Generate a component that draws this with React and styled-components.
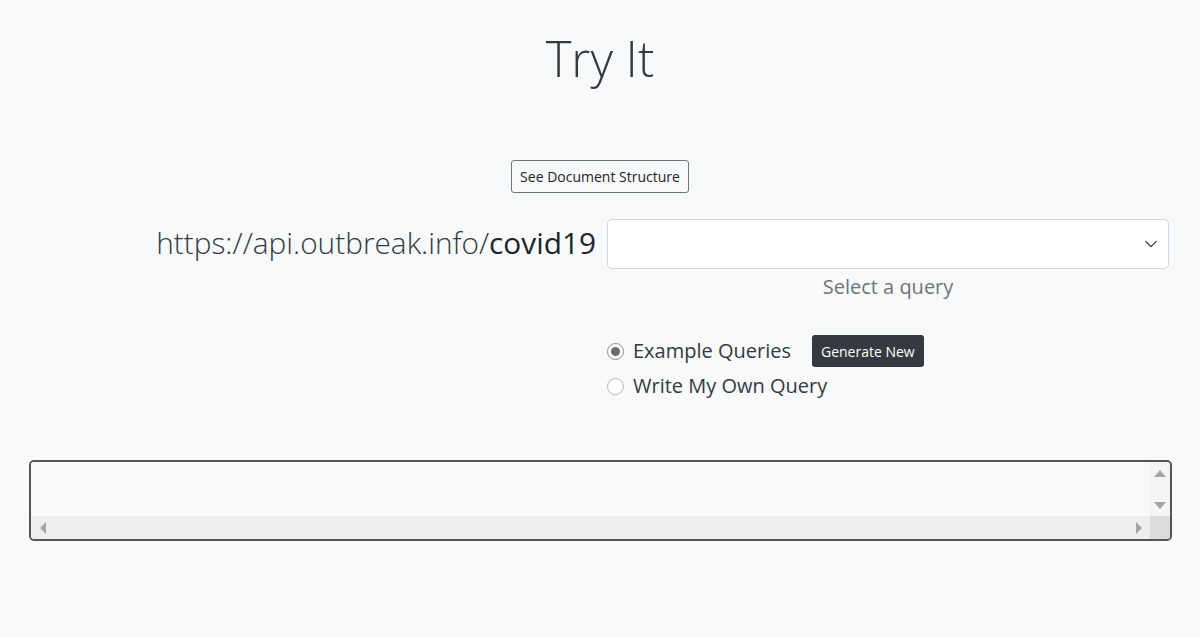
import React from "react";
import styled, { createGlobalStyle } from "styled-components";

const Global = createGlobalStyle`
  html, body { margin: 0; padding: 0; background: #f8f9fa; }
  body { font-family: "Open Sans", "Noto Sans", sans-serif; color: #343a40; }
`;

const Page = styled.div`
  width: 1200px;
  height: 637px;
  box-sizing: border-box;
  display: flex;
  flex-direction: column;
  align-items: center;
  padding-top: 18px;
`;

const Title = styled.h1`
  margin: 0;
  font-weight: 300;
  font-size: 49px;
  line-height: 80px;
  color: #343a40;
`;

const OutlineButton = styled.button`
  margin-top: 62px;
  font-family: inherit;
  font-size: 14px;
  color: #212529;
  background: #f8f9fa;
  border: 1px solid #6c757d;
  border-radius: 3px;
  height: 33px;
  padding: 0 8px;
`;

const QueryRow = styled.div`
  margin-top: 26px;
  width: 100%;
  display: grid;
  grid-template-columns: 596px 562px;
  column-gap: 11px;
`;

const Url = styled.div`
  text-align: right;
  font-size: 29.8px;
  font-weight: 300;
  line-height: 48px;
  color: #343a40;
  white-space: nowrap;
`;

const Bold = styled.span`
  font-weight: 400;
  color: #212529;
`;

const SelectCol = styled.div`
  display: flex;
  flex-direction: column;
  align-items: center;
`;

const SelectBox = styled.div`
  box-sizing: border-box;
  width: 100%;
  height: 50px;
  background: #fff;
  border: 1px solid #ced4da;
  border-radius: 5px;
  display: flex;
  align-items: center;
  justify-content: flex-end;
  padding-right: 10px;
`;

const Hint = styled.div`
  margin-top: 4px;
  font-size: 20px;
  color: #6c757d;
  line-height: 28px;
`;

const Options = styled.div`
  margin-top: 34px;
  width: 100%;
  display: grid;
  grid-template-columns: 607px auto;
`;

const OptionList = styled.div`
  grid-column: 2;
  display: flex;
  flex-direction: column;
  gap: 3px;
`;

const OptionRow = styled.label`
  display: flex;
  align-items: center;
  gap: 9px;
  font-size: 20px;
  color: #343a40;
  line-height: 32px;
`;

const Radio = styled.span`
  box-sizing: border-box;
  width: 17px;
  height: 17px;
  border-radius: 50%;
  border: 1px solid ${(p) => (p.checked ? "#8a8a8a" : "#b5b5b5")};
  background: #fff;
  display: flex;
  align-items: center;
  justify-content: center;
  &::after {
    content: "";
    width: 9px;
    height: 9px;
    border-radius: 50%;
    background: ${(p) => (p.checked ? "#6b6b6b" : "transparent")};
  }
`;

const DarkButton = styled.button`
  margin-left: 12px;
  font-family: inherit;
  font-size: 14px;
  color: #fff;
  background: #343a40;
  border: none;
  border-radius: 3px;
  height: 32px;
  padding: 0 9px;
`;

const Editor = styled.div`
  margin-top: 58px;
  box-sizing: border-box;
  width: 1143px;
  height: 81px;
  border: 2px solid #555;
  border-radius: 5px;
  background: #f8f9fa;
  display: grid;
  grid-template-columns: 1fr 20px;
  grid-template-rows: 1fr 23px;
  overflow: hidden;
`;

const EditorText = styled.div`
  background: #f8f9fa;
`;

const VTrack = styled.div`
  background: #f4f4f4;
  display: flex;
  flex-direction: column;
  justify-content: space-between;
  align-items: center;
  padding: 7px 0 6px;
`;

const HTrack = styled.div`
  background: #efefef;
  display: flex;
  justify-content: space-between;
  align-items: center;
  padding: 0 7px 0 8px;
`;

const Corner = styled.div`
  background: #dcdcdc;
`;

const Arrow = ({ dir }) => {
  const paths = {
    up: "M0 8 L6 1 L12 8 Z",
    down: "M0 1 L6 8 L12 1 Z",
    left: "M7 0 L1 6 L7 12 Z",
    right: "M1 0 L7 6 L1 12 Z",
  };
  const vertical = dir === "up" || dir === "down";
  return (
    <svg width={vertical ? 12 : 8} height={vertical ? 9 : 12} viewBox={vertical ? "0 0 12 9" : "0 0 8 12"}>
      <path d={paths[dir]} fill="#a3a3a3" />
    </svg>
  );
};

const Chevron = () => (
  <svg width="14" height="14" viewBox="0 0 16 16" fill="none" stroke="#343a40" strokeWidth="1.5" strokeLinecap="round" strokeLinejoin="round">
    <path d="M2 5l6 6 6-6" />
  </svg>
);

export default function App() {
  return (
    <>
      <Global />
      <Page>
        <Title>Try It</Title>
        <OutlineButton>See Document Structure</OutlineButton>
        <QueryRow>
          <Url>
            https://api.outbreak.info/<Bold>covid19</Bold>
          </Url>
          <SelectCol>
            <SelectBox>
              <Chevron />
            </SelectBox>
            <Hint>Select a query</Hint>
          </SelectCol>
        </QueryRow>
        <Options>
          <OptionList>
            <OptionRow>
              <Radio checked />
              Example Queries
              <DarkButton>Generate New</DarkButton>
            </OptionRow>
            <OptionRow>
              <Radio />
              Write My Own Query
            </OptionRow>
          </OptionList>
        </Options>
        <Editor>
          <EditorText />
          <VTrack>
            <Arrow dir="up" />
            <Arrow dir="down" />
          </VTrack>
          <HTrack>
            <Arrow dir="left" />
            <Arrow dir="right" />
          </HTrack>
          <Corner />
        </Editor>
      </Page>
    </>
  );
}
